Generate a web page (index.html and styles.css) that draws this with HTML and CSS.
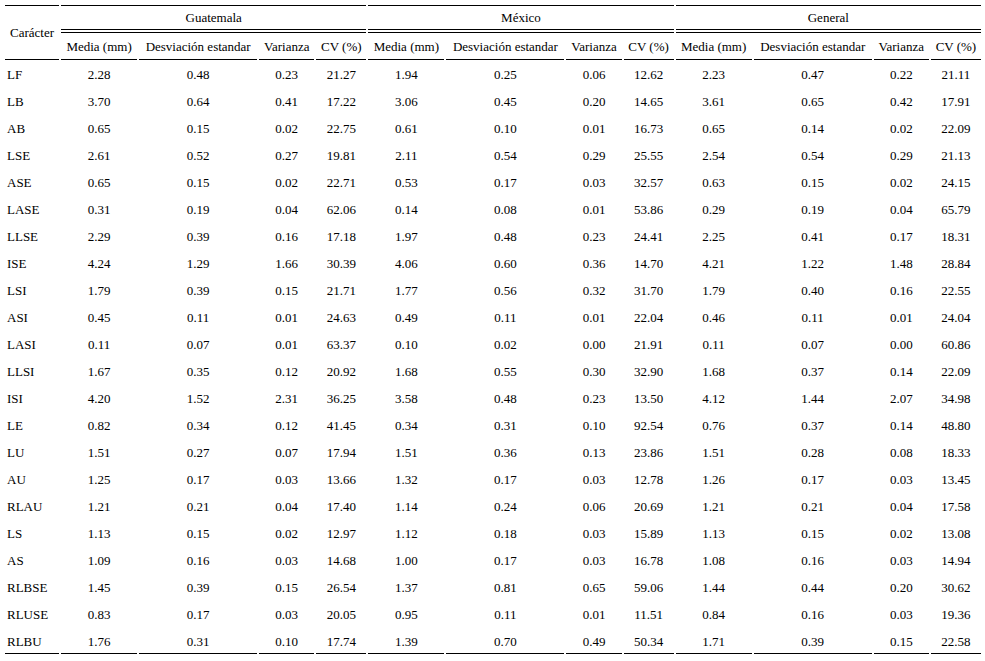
FILE: index.html
```html
<!DOCTYPE html>
<html lang="es">
<head>
<meta charset="utf-8">
<title>Tabla de caracteres</title>
<link rel="stylesheet" href="styles.css">
</head>
<body>
<table class="stats">
  <colgroup>
    <col class="c-char">
    <col class="c-media"><col class="c-desv"><col class="c-var"><col class="c-cv">
    <col class="c-media"><col class="c-desv"><col class="c-var"><col class="c-cv">
    <col class="c-media"><col class="c-desv"><col class="c-var"><col class="c-cv">
  </colgroup>
  <thead>
    <tr class="groups">
      <th rowspan="2" class="char-head">Carácter</th>
      <th colspan="4" class="group">Guatemala</th>
      <th colspan="4" class="group">México</th>
      <th colspan="4" class="group">General</th>
    </tr>
    <tr class="subs">
      <th>Media (mm)</th><th>Desviación estandar</th><th>Varianza</th><th>CV (%)</th>
      <th>Media (mm)</th><th>Desviación estandar</th><th>Varianza</th><th>CV (%)</th>
      <th>Media (mm)</th><th>Desviación estandar</th><th>Varianza</th><th>CV (%)</th>
    </tr>
  </thead>
  <tbody>
    <tr><td>LF</td><td>2.28</td><td>0.48</td><td>0.23</td><td>21.27</td><td>1.94</td><td>0.25</td><td>0.06</td><td>12.62</td><td>2.23</td><td>0.47</td><td>0.22</td><td>21.11</td></tr>
    <tr><td>LB</td><td>3.70</td><td>0.64</td><td>0.41</td><td>17.22</td><td>3.06</td><td>0.45</td><td>0.20</td><td>14.65</td><td>3.61</td><td>0.65</td><td>0.42</td><td>17.91</td></tr>
    <tr><td>AB</td><td>0.65</td><td>0.15</td><td>0.02</td><td>22.75</td><td>0.61</td><td>0.10</td><td>0.01</td><td>16.73</td><td>0.65</td><td>0.14</td><td>0.02</td><td>22.09</td></tr>
    <tr><td>LSE</td><td>2.61</td><td>0.52</td><td>0.27</td><td>19.81</td><td>2.11</td><td>0.54</td><td>0.29</td><td>25.55</td><td>2.54</td><td>0.54</td><td>0.29</td><td>21.13</td></tr>
    <tr><td>ASE</td><td>0.65</td><td>0.15</td><td>0.02</td><td>22.71</td><td>0.53</td><td>0.17</td><td>0.03</td><td>32.57</td><td>0.63</td><td>0.15</td><td>0.02</td><td>24.15</td></tr>
    <tr><td>LASE</td><td>0.31</td><td>0.19</td><td>0.04</td><td>62.06</td><td>0.14</td><td>0.08</td><td>0.01</td><td>53.86</td><td>0.29</td><td>0.19</td><td>0.04</td><td>65.79</td></tr>
    <tr><td>LLSE</td><td>2.29</td><td>0.39</td><td>0.16</td><td>17.18</td><td>1.97</td><td>0.48</td><td>0.23</td><td>24.41</td><td>2.25</td><td>0.41</td><td>0.17</td><td>18.31</td></tr>
    <tr><td>ISE</td><td>4.24</td><td>1.29</td><td>1.66</td><td>30.39</td><td>4.06</td><td>0.60</td><td>0.36</td><td>14.70</td><td>4.21</td><td>1.22</td><td>1.48</td><td>28.84</td></tr>
    <tr><td>LSI</td><td>1.79</td><td>0.39</td><td>0.15</td><td>21.71</td><td>1.77</td><td>0.56</td><td>0.32</td><td>31.70</td><td>1.79</td><td>0.40</td><td>0.16</td><td>22.55</td></tr>
    <tr><td>ASI</td><td>0.45</td><td>0.11</td><td>0.01</td><td>24.63</td><td>0.49</td><td>0.11</td><td>0.01</td><td>22.04</td><td>0.46</td><td>0.11</td><td>0.01</td><td>24.04</td></tr>
    <tr><td>LASI</td><td>0.11</td><td>0.07</td><td>0.01</td><td>63.37</td><td>0.10</td><td>0.02</td><td>0.00</td><td>21.91</td><td>0.11</td><td>0.07</td><td>0.00</td><td>60.86</td></tr>
    <tr><td>LLSI</td><td>1.67</td><td>0.35</td><td>0.12</td><td>20.92</td><td>1.68</td><td>0.55</td><td>0.30</td><td>32.90</td><td>1.68</td><td>0.37</td><td>0.14</td><td>22.09</td></tr>
    <tr><td>ISI</td><td>4.20</td><td>1.52</td><td>2.31</td><td>36.25</td><td>3.58</td><td>0.48</td><td>0.23</td><td>13.50</td><td>4.12</td><td>1.44</td><td>2.07</td><td>34.98</td></tr>
    <tr><td>LE</td><td>0.82</td><td>0.34</td><td>0.12</td><td>41.45</td><td>0.34</td><td>0.31</td><td>0.10</td><td>92.54</td><td>0.76</td><td>0.37</td><td>0.14</td><td>48.80</td></tr>
    <tr><td>LU</td><td>1.51</td><td>0.27</td><td>0.07</td><td>17.94</td><td>1.51</td><td>0.36</td><td>0.13</td><td>23.86</td><td>1.51</td><td>0.28</td><td>0.08</td><td>18.33</td></tr>
    <tr><td>AU</td><td>1.25</td><td>0.17</td><td>0.03</td><td>13.66</td><td>1.32</td><td>0.17</td><td>0.03</td><td>12.78</td><td>1.26</td><td>0.17</td><td>0.03</td><td>13.45</td></tr>
    <tr><td>RLAU</td><td>1.21</td><td>0.21</td><td>0.04</td><td>17.40</td><td>1.14</td><td>0.24</td><td>0.06</td><td>20.69</td><td>1.21</td><td>0.21</td><td>0.04</td><td>17.58</td></tr>
    <tr><td>LS</td><td>1.13</td><td>0.15</td><td>0.02</td><td>12.97</td><td>1.12</td><td>0.18</td><td>0.03</td><td>15.89</td><td>1.13</td><td>0.15</td><td>0.02</td><td>13.08</td></tr>
    <tr><td>AS</td><td>1.09</td><td>0.16</td><td>0.03</td><td>14.68</td><td>1.00</td><td>0.17</td><td>0.03</td><td>16.78</td><td>1.08</td><td>0.16</td><td>0.03</td><td>14.94</td></tr>
    <tr><td>RLBSE</td><td>1.45</td><td>0.39</td><td>0.15</td><td>26.54</td><td>1.37</td><td>0.81</td><td>0.65</td><td>59.06</td><td>1.44</td><td>0.44</td><td>0.20</td><td>30.62</td></tr>
    <tr><td>RLUSE</td><td>0.83</td><td>0.17</td><td>0.03</td><td>20.05</td><td>0.95</td><td>0.11</td><td>0.01</td><td>11.51</td><td>0.84</td><td>0.16</td><td>0.03</td><td>19.36</td></tr>
    <tr><td>RLBU</td><td>1.76</td><td>0.31</td><td>0.10</td><td>17.74</td><td>1.39</td><td>0.70</td><td>0.49</td><td>50.34</td><td>1.71</td><td>0.39</td><td>0.15</td><td>22.58</td></tr>
  </tbody>
</table>
</body>
</html>
```
FILE: styles.css
```css
html, body {
  margin: 0;
  padding: 0;
  background: #ffffff;
}

body {
  padding: 5px 0 0 3px;
  font-family: "Liberation Serif", "Times New Roman", serif;
  font-size: 13px;
  color: #000000;
}

.stats {
  border-collapse: separate;
  border-spacing: 2px 0;
  table-layout: fixed;
  width: 980px;
}

.c-char { width: 54px; }
.c-media { width: 76px; }
.c-desv { width: 118px; }
.c-var { width: 55px; }
.c-cv { width: 50px; }

.stats th,
.stats td {
  padding: 0 2px;
  font-weight: normal;
  white-space: nowrap;
  text-align: center;
  vertical-align: middle;
  overflow: hidden;
  box-sizing: border-box;
}

.groups th {
  border-top: 1px solid #000;
  height: 28px;
}

.groups .group {
  border-bottom: 4px double #000;
  padding-top: 1px;
}

.char-head {
  text-align: left;
  padding-left: 2px;
  padding-top: 2px;
  border-bottom: 1px solid #000;
}

.subs th {
  height: 27px;
  padding-top: 1px;
  border-bottom: 1px solid #000;
}

.stats td {
  height: 27px;
  padding-top: 3px;
}

.stats td:first-child {
  text-align: left;
  padding-left: 2px;
}

.stats tbody tr:last-child td {
  border-bottom: 1px solid #000;
}
```
